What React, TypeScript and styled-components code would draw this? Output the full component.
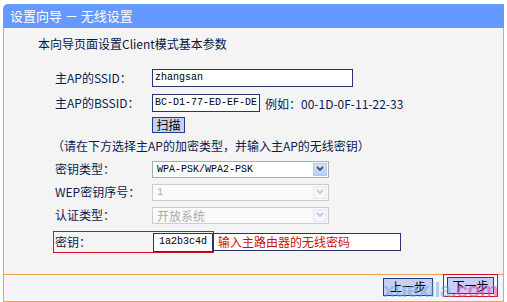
import React from "react";
import styled, { createGlobalStyle } from "styled-components";

const GlobalStyle = createGlobalStyle`
  html, body {
    margin: 0;
    padding: 0;
    background: #ffffff;
  }
  body {
    padding: 4px 0 0 3px;
    font-family: "Noto Sans CJK SC", "Liberation Sans", sans-serif;
    font-size: 12px;
  }
`;

const Window = styled.div`
  width: 501px;
  display: flex;
  flex-direction: column;
`;

const TitleBar = styled.div`
  height: 24px;
  background: #6699ff;
  border-top-left-radius: 5px;
  border-top-right-radius: 1px;
  color: #ffffff;
  font-size: 13px;
  line-height: 24px;
  padding-left: 7px;
  white-space: pre;
`;

const Body = styled.div`
  height: 246px;
  box-sizing: border-box;
  background: #f4f4f4;
  border-left: 1px solid #f0a24e;
  border-right: 1px solid #f0a24e;
  padding: 8px 0 0 51px;
  display: flex;
  flex-direction: column;
  color: #0b1a4f;
`;

const Heading = styled.div`
  margin-left: -17px;
  line-height: 16px;
  height: 16px;
  margin-bottom: 13px;
  color: #0a1440;
`;

const Row = styled.div<{ $h: number }>`
  height: ${(p) => p.$h}px;
  display: flex;
  align-items: center;
`;

const Label = styled.div`
  width: 97px;
  flex: none;
  line-height: 16px;
`;

const Input = styled.div<{ $w: number }>`
  width: ${(p) => p.$w}px;
  height: 18px;
  box-sizing: border-box;
  border: 1px solid #24356f;
  background: #ffffff;
  font-family: "Liberation Mono", "DejaVu Sans Mono", monospace;
  font-size: 10px;
  line-height: 16px;
  padding-left: 2px;
  color: #000000;
  white-space: nowrap;
  overflow: hidden;
`;

const Note = styled.span`
  margin-left: 5px;
`;

const SmallButton = styled.div<{ $w: number; $h: number }>`
  width: ${(p) => p.$w}px;
  height: ${(p) => p.$h}px;
  box-sizing: border-box;
  border: 1px solid #1f3b8a;
  background: #c7cff7;
  color: #000000;
  display: flex;
  align-items: center;
  justify-content: center;
  line-height: 1;
`;

const Hint = styled.div`
  margin-left: -3px;
  line-height: 16px;
`;

const Select = styled.div<{ $disabled?: boolean }>`
  width: 177px;
  height: 17px;
  box-sizing: border-box;
  border: 1px solid ${(p) => (p.$disabled ? "#cfcdc3" : "#a6adb5")};
  background: ${(p) => (p.$disabled ? "#fafafa" : "#ffffff")};
  display: flex;
  align-items: center;
  color: ${(p) => (p.$disabled ? "#aaaaaa" : "#000000")};
`;

const SelectText = styled.div<{ $cjk?: boolean }>`
  flex: 1;
  padding-left: 4px;
  font-family: ${(p) =>
    p.$cjk ? '"Noto Sans CJK SC", sans-serif' : '"Liberation Mono", "DejaVu Sans Mono", monospace'};
  font-size: ${(p) => (p.$cjk ? "12px" : "10px")};
  line-height: 15px;
`;

const ArrowBox = styled.div<{ $disabled?: boolean }>`
  width: 14px;
  height: 13px;
  margin-right: 1px;
  box-sizing: border-box;
  border: 1px solid ${(p) => (p.$disabled ? "#e4e9f4" : "#b6c7ef")};
  background: ${(p) =>
    p.$disabled
      ? "#f3f5fa"
      : "linear-gradient(180deg, #d6e2fd 0%, #b9cdf7 100%)"};
  display: flex;
  align-items: center;
  justify-content: center;
`;

const KeyRow = styled.div`
  height: 25px;
  display: flex;
  align-items: center;
  margin-left: -2px;
  margin-top: 2px;
`;

const RedFrame = styled.div`
  width: 161px;
  height: 22px;
  box-sizing: border-box;
  border: 1px solid #d01020;
  display: flex;
  align-items: center;
  padding-left: 1px;
`;

const KeyLabel = styled(Label)`
  width: 98px;
`;

const KeyInput = styled(Input)`
  height: 19px;
  margin-top: 1px;
  padding-left: 5px;
`;

const KeyNote = styled.div`
  width: 188px;
  height: 18px;
  box-sizing: border-box;
  margin-left: -1px;
  margin-top: 1px;
  border: 1px solid #24356f;
  background: #ffffff;
  color: #cc1010;
  line-height: 16px;
  padding-left: 4px;
`;

const Footer = styled.div`
  position: relative;
  height: 28px;
  box-sizing: border-box;
  background: #f3f5fa;
  border: 1px solid #f0a24e;
  display: flex;
  justify-content: flex-end;
  align-items: flex-start;
  padding-right: 5px;
`;

const PrevWrap = styled.div`
  margin-top: 3px;
  margin-right: 10px;
`;

const NextFrame = styled.div`
  width: 55px;
  height: 23px;
  box-sizing: border-box;
  margin-top: -1px;
  border: 1px solid #d01020;
  display: flex;
  align-items: center;
  justify-content: center;
`;

const Watermark = styled.div`
  position: absolute;
  right: 5px;
  bottom: 0;
  line-height: 22px;
  font-family: "Liberation Sans", sans-serif;
  font-weight: 700;
  font-size: 21px;
  letter-spacing: -0.5px;
  pointer-events: none;
`;

const WaterBlue = styled.span`
  color: rgba(96, 168, 220, 0.5);
`;

const WaterPink = styled.span`
  color: rgba(232, 60, 150, 0.55);
`;

const Chevron = ({ disabled }: { disabled?: boolean }) => (
  <svg width="8" height="6" viewBox="0 0 8 6">
    <path
      d="M1 1 L4 4 L7 1"
      fill="none"
      stroke={disabled ? "#c3cbda" : "#3d5080"}
      strokeWidth="1.8"
    />
  </svg>
);

const Dropdown = ({ value, disabled, cjk }: { value: string; disabled?: boolean; cjk?: boolean }) => (
  <Select $disabled={disabled}>
    <SelectText $cjk={cjk}>{value}</SelectText>
    <ArrowBox $disabled={disabled}>
      <Chevron disabled={disabled} />
    </ArrowBox>
  </Select>
);

export default function App() {
  return (
    <>
      <GlobalStyle />
      <Window>
        <TitleBar>设置向导 － 无线设置</TitleBar>
        <Body>
          <Heading>本向导页面设置Client模式基本参数</Heading>
          <Row $h={26}>
            <Label>主AP的SSID：</Label>
            <Input $w={201}>zhangsan</Input>
          </Row>
          <Row $h={24}>
            <Label>主AP的BSSID：</Label>
            <Input $w={108}>BC-D1-77-ED-EF-DE</Input>
            <Note>例如：00-1D-0F-11-22-33</Note>
          </Row>
          <Row $h={20}>
            <Label />
            <SmallButton $w={33} $h={16}>扫描</SmallButton>
          </Row>
          <Row $h={22}>
            <Hint>（请在下方选择主AP的加密类型，并输入主AP的无线密钥）</Hint>
          </Row>
          <Row $h={24}>
            <Label>密钥类型：</Label>
            <Dropdown value="WPA-PSK/WPA2-PSK" />
          </Row>
          <Row $h={22}>
            <Label>WEP密钥序号：</Label>
            <Dropdown value="1" disabled />
          </Row>
          <Row $h={24}>
            <Label>认证类型：</Label>
            <Dropdown value="开放系统" disabled cjk />
          </Row>
          <KeyRow>
            <RedFrame>
              <KeyLabel>密钥：</KeyLabel>
              <KeyInput $w={62}>1a2b3c4d</KeyInput>
            </RedFrame>
            <KeyNote>输入主路由器的无线密码</KeyNote>
          </KeyRow>
        </Body>
        <Footer>
          <PrevWrap>
            <SmallButton $w={50} $h={18}>上一步</SmallButton>
          </PrevWrap>
          <NextFrame>
            <SmallButton $w={47} $h={17}>下一步</SmallButton>
          </NextFrame>
          <Watermark>
            <WaterBlue>xuexila</WaterBlue>
            <WaterPink>.com</WaterPink>
          </Watermark>
        </Footer>
      </Window>
    </>
  );
}
